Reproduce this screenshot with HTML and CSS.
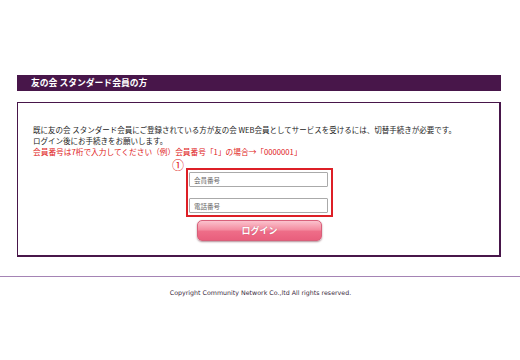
FILE: index.html
```html
<!DOCTYPE html>
<html lang="ja">
<head>
<meta charset="utf-8">
<title>友の会 スタンダード会員の方</title>
<link rel="stylesheet" href="styles.css">
</head>
<body>
<main class="page">
  <section class="panel">
    <h2 class="panel-title">友の会 スタンダード会員の方</h2>
    <div class="panel-body">
      <p class="lead">既に友の会 スタンダード会員にご登録されている方が友の会 WEB会員としてサービスを受けるには、切替手続きが必要です。<br>ログイン後にお手続きをお願いします。</p>
      <p class="note">会員番号は7桁で入力してください（例）会員番号「1」の場合→「0000001」</p>
      <div class="form-wrap">
        <div class="field-group">
          <span class="marker">①</span>
          <input class="field" type="text" placeholder="会員番号">
          <input class="field" type="text" placeholder="電話番号">
        </div>
        <button class="login-btn" type="button">ログイン</button>
      </div>
    </div>
  </section>
</main>
<footer class="footer">
  <p class="copyright">Copyright Community Network Co.,ltd All rights reserved.</p>
</footer>
</body>
</html>
```

FILE: styles.css
```css
html, body {
  margin: 0;
  padding: 0;
  background: #ffffff;
}
body {
  font-family: "Noto Sans CJK JP", "DejaVu Sans", sans-serif;
  color: #222;
  width: 520px;
  height: 360px;
}
.page {
  padding: 75px 19px 0 17px;
}
.panel-title {
  margin: 0;
  height: 16px;
  line-height: 16px;
  background: #48164a;
  color: #fff;
  font-size: 8.8px;
  font-weight: bold;
  padding-left: 14px;
}
.panel-body {
  margin-top: 11px;
  border: 1px solid #48164a;
  border-width: 1px 2px 2px 1px;
  padding: 21px 14px 14px 15px;
}
.lead {
  margin: 0;
  font-size: 7.5px;
  line-height: 11px;
  color: #222;
}
.note {
  margin: 0;
  font-size: 7.7px;
  line-height: 11px;
  color: #e02020;
}
.form-wrap {
  display: flex;
  flex-direction: column;
  align-items: center;
  margin-top: 11px;
  margin-left: 1px;
}
.field-group {
  position: relative;
  width: 141px;
  border: 2px solid #dd1f26;
  padding: 2px 1px 2px 1px;
  display: flex;
  flex-direction: column;
  gap: 11px;
}
.marker {
  position: absolute;
  left: -16px;
  top: -11px;
  color: #e02020;
  font-size: 12px;
  line-height: 12px;
}
.field {
  box-sizing: border-box;
  width: 139px;
  height: 15px;
  border: 1px solid #aaa;
  border-radius: 1px;
  padding: 0 4px;
  font-family: "Noto Sans CJK JP", sans-serif;
  font-size: 6.5px;
  color: #555;
  background: #fff;
  outline: none;
}
.field::placeholder {
  color: #666;
}
.login-btn {
  margin-top: 3px;
  width: 125px;
  height: 21px;
  border: 1px solid #d8607a;
  border-radius: 5px;
  background: linear-gradient(#fbc2cd 0%, #f48da1 45%, #ee6d88 55%, #e95f7d 100%);
  box-shadow: 0 1px 2px rgba(80, 0, 20, 0.45);
  color: #fff;
  font-family: "Noto Sans CJK JP", sans-serif;
  font-size: 9px;
  font-weight: bold;
  text-shadow: 0 0 1px rgba(150, 30, 60, 0.6);
  padding: 0;
}
.footer {
  margin-top: 19px;
  border-top: 1px solid #a584b5;
}
.copyright {
  margin: 12px 0 0;
  text-align: center;
  font-family: "DejaVu Sans", sans-serif;
  font-size: 6.3px;
  color: #3a2a40;
  padding-left: 1px;
}
```
